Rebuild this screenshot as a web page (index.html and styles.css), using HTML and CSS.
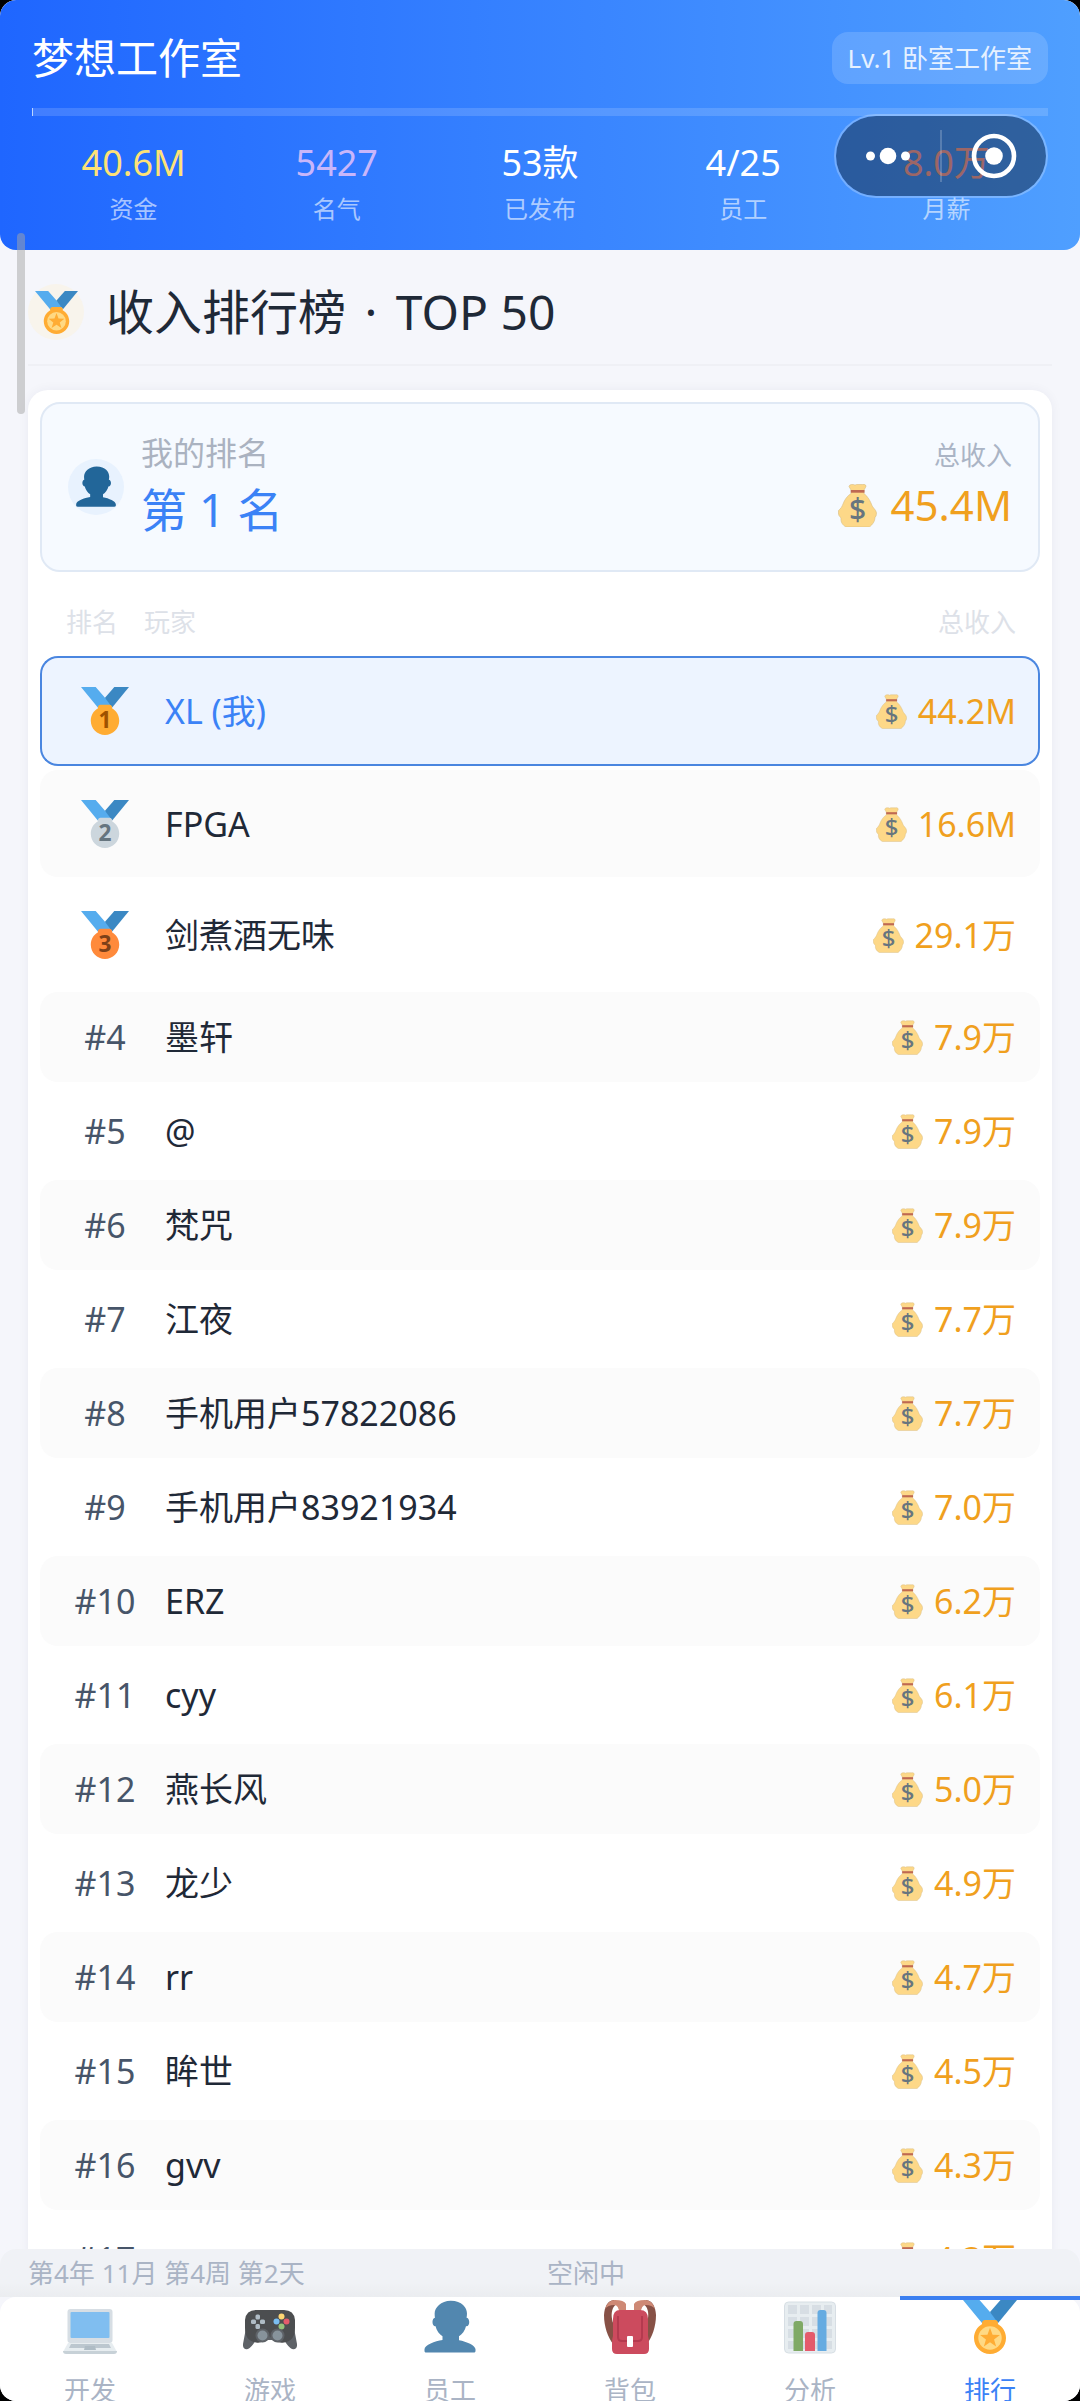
FILE: index.html
```
<!DOCTYPE html>
<html lang="zh-CN">

<head>
    <meta charset="UTF-8">
    <meta name="viewport" content="width=device-width, initial-scale=1.0">
    <link rel="stylesheet" href="styles.css">
    <title>梦想工作室</title>
</head>

<body>

    <!-- icons used more than once -->
    <svg class="sprite" aria-hidden="true">
        <symbol id="bag" viewBox="0 0 39 43">
            <path fill="#fdd888" stroke="#d9bd83" stroke-width=".6" d="M13 6 11 2.500q.5-2 2.500-2h2q1.500 1 3 0h6q2-.5 3 .5 1 1 0 2.500L26 6v3.500c4 3 6.500 8 8 12 .5 2 4 4 4.500 7.500q0 3-1.500 4.500c0 4-2.500 7-5.500 9.500H8c-3.500-2-5.500-5-5-9L1 31.500Q0 29 .5 26.500C3 24.500 4 22.500 5 20c1.500-4 4-8 8-10.500z"/>
            <path fill="#bf6952" d="M12.800 6h13.700v2.700H12.800z"/>
            <text x="19.500" y="36" class="bag-sign">$</text>
        </symbol>
        <symbol id="ribbon" viewBox="0 0 36 36">
            <path fill="#55acee" d="M18 8l-7-8H0l14 17 11.521-4.75z"/>
            <path fill="#3b88c3" d="M25 0l-7 8 5.390 7.312 1.227-1.489L36 0z"/>
            <path fill="currentColor" d="M23.205 16.026c.08-.217.131-.448.131-.693 0-1.104-.896-2-2-2h-6.667c-1.104 0-2 .896-2 2 0 .245.05.476.131.693-3.258 1.826-5.464 5.307-5.464 9.307C7.335 31.224 12.111 36 18.002 36c5.892 0 10.668-4.776 10.668-10.667 0-4-2.206-7.481-5.465-9.307z"/>
        </symbol>
        <symbol id="medal" viewBox="0 0 36 36">
            <use href="#ribbon"/>
            <circle cx="18" cy="25.300" r="7.800" fill="#ffd983"/>
            <path fill="#ffac33" d="M18 18.500l1.700 4.600 4.900.2-3.900 3 1.400 4.700-4.100-2.800-4.100 2.800 1.400-4.700-3.900-3 4.900-.2z"/>
        </symbol>
        <symbol id="person" viewBox="0 0 36 36">
            <path fill="#226699" d="M24 26.799v-2.566c2-1.348 4.080-3.779 4.703-6.896.186.103.206.170.413.170.991 0 1.709-1.287 1.709-2.873 0-1.562-.823-2.827-1.794-2.865.187-.674.293-1.577.293-2.735C29.324 5.168 26 .527 18.541.527c-6.629 0-10.777 4.641-10.777 8.507 0 1.123.069 2.043.188 2.755-.911.137-1.629 1.352-1.629 2.845 0 1.587.804 2.873 1.796 2.873.206 0 .025-.067.209-.170C8.952 20.453 11 22.885 13 24.232v2.414c-5 .645-12 3.437-12 6.230v1.061C1 35 2.076 35 3.137 35h29.725C33.924 35 35 35 35 33.938v-1.061c0-2.615-6-5.225-11-6.078z"/>
        </symbol>
    </svg>

    <div class="app">

        <header class="header">
            <div class="header-top">
                <h1 class="studio">梦想工作室</h1>
                <span class="level">Lv.1 卧室工作室</span>
            </div>
            <div class="progress"><div class="progress-fill"></div></div>
            <div class="stats">
                <div class="stat"><span class="stat-value money">40.6M</span><span class="stat-label">资金</span></div>
                <div class="stat"><span class="stat-value fame">5427</span><span class="stat-label">名气</span></div>
                <div class="stat"><span class="stat-value">53款</span><span class="stat-label">已发布</span></div>
                <div class="stat"><span class="stat-value">4/25</span><span class="stat-label">员工</span></div>
                <div class="stat"><span class="stat-value salary">8.0万</span><span class="stat-label">月薪</span></div>
            </div>
            <div class="capsule">
                <button class="capsule-btn" aria-label="更多">
                    <svg width="46" height="20" viewBox="0 0 46 20" fill="#fff"><circle cx="5.500" cy="10" r="4.500"/><circle cx="23" cy="10" r="8.300"/><circle cx="40.500" cy="10" r="4.500"/></svg>
                </button>
                <button class="capsule-btn" aria-label="关闭">
                    <svg width="46" height="46" viewBox="0 0 46 46"><circle cx="23" cy="23" r="20" fill="none" stroke="#fff" stroke-width="4.600"/><circle cx="23" cy="23" r="8.800" fill="#fff"/></svg>
                </button>
            </div>
        </header>

        <div class="scroll-thumb"></div>

        <main class="content">
            <div class="page-title">
                <span class="round-icon cream"><svg width="43" height="43"><use href="#medal"/></svg></span>
                <h2 class="title">收入排行榜 <span class="title-dot">·</span> TOP 50</h2>
            </div>

            <section class="card">
                <div class="mine">
                    <span class="round-icon sky"><svg width="42" height="42"><use href="#person"/></svg></span>
                    <div class="mine-rank">
                        <div class="mine-label">我的排名</div>
                        <div class="mine-place">第 1 名</div>
                    </div>
                    <div class="mine-total">
                        <div class="total-label">总收入</div>
                        <div class="total-value"><svg width="39" height="43"><use href="#bag"/></svg>45.4M</div>
                    </div>
                </div>

                <table class="ranking">
                    <thead>
                        <tr><th class="rank">排名</th><th>玩家</th><th class="income">总收入</th></tr>
                    </thead>
                    <tbody>
                        <tr class="top me">
                            <td class="rank"><svg class="gold" width="48" height="48" viewBox="0 0 36 36"><use href="#ribbon"/><text x="18" y="31">1</text></svg></td>
                            <td class="name">XL (我)</td>
                            <td class="income"><svg width="31" height="35"><use href="#bag"/></svg>44.2M</td>
                        </tr>
                        <tr class="top">
                            <td class="rank"><svg class="silver" width="48" height="48" viewBox="0 0 36 36"><use href="#ribbon"/><text x="18" y="31">2</text></svg></td>
                            <td class="name">FPGA</td>
                            <td class="income"><svg width="31" height="35"><use href="#bag"/></svg>16.6M</td>
                        </tr>
                        <tr class="top">
                            <td class="rank"><svg class="bronze" width="48" height="48" viewBox="0 0 36 36"><use href="#ribbon"/><text x="18" y="31">3</text></svg></td>
                            <td class="name">剑煮酒无味</td>
                            <td class="income"><svg width="31" height="35"><use href="#bag"/></svg>29.1万</td>
                        </tr>
                        <tr><td class="rank">#4</td><td class="name">墨轩</td><td class="income"><svg width="31" height="35"><use href="#bag"/></svg>7.9万</td></tr>
                        <tr><td class="rank">#5</td><td class="name">@</td><td class="income"><svg width="31" height="35"><use href="#bag"/></svg>7.9万</td></tr>
                        <tr><td class="rank">#6</td><td class="name">梵咒</td><td class="income"><svg width="31" height="35"><use href="#bag"/></svg>7.9万</td></tr>
                        <tr><td class="rank">#7</td><td class="name">江夜</td><td class="income"><svg width="31" height="35"><use href="#bag"/></svg>7.7万</td></tr>
                        <tr><td class="rank">#8</td><td class="name">手机用户57822086</td><td class="income"><svg width="31" height="35"><use href="#bag"/></svg>7.7万</td></tr>
                        <tr><td class="rank">#9</td><td class="name">手机用户83921934</td><td class="income"><svg width="31" height="35"><use href="#bag"/></svg>7.0万</td></tr>
                        <tr><td class="rank">#10</td><td class="name">ERZ</td><td class="income"><svg width="31" height="35"><use href="#bag"/></svg>6.2万</td></tr>
                        <tr><td class="rank">#11</td><td class="name">cyy</td><td class="income"><svg width="31" height="35"><use href="#bag"/></svg>6.1万</td></tr>
                        <tr><td class="rank">#12</td><td class="name">燕长风</td><td class="income"><svg width="31" height="35"><use href="#bag"/></svg>5.0万</td></tr>
                        <tr><td class="rank">#13</td><td class="name">龙少</td><td class="income"><svg width="31" height="35"><use href="#bag"/></svg>4.9万</td></tr>
                        <tr><td class="rank">#14</td><td class="name">rr</td><td class="income"><svg width="31" height="35"><use href="#bag"/></svg>4.7万</td></tr>
                        <tr><td class="rank">#15</td><td class="name">眸世</td><td class="income"><svg width="31" height="35"><use href="#bag"/></svg>4.5万</td></tr>
                        <tr><td class="rank">#16</td><td class="name">gvv</td><td class="income"><svg width="31" height="35"><use href="#bag"/></svg>4.3万</td></tr>
                        <tr><td class="rank">#17</td><td class="name"></td><td class="income"><svg width="31" height="35"><use href="#bag"/></svg>4.3万</td></tr>
                    </tbody>
                </table>
            </section>
        </main>

        <div class="status">
            <span>第4年 11月 第4周 第2天</span>
            <span>空闲中</span>
        </div>

        <nav class="tabs">
            <a class="tab" href="#dev">
                <svg viewBox="0 0 54 54">
                    <rect x="4.500" y="9" width="45" height="34" rx="3" fill="#ccd6dd"/>
                    <rect x="7.500" y="12" width="39" height="26" rx="1" fill="#5dadec"/>
                    <path fill="#e1e8ed" d="M5 43h44l5 9H0z"/>
                    <path fill="#aab8c2" d="M8 44h38l2 4H6z"/>
                    <path fill="#99aab5" d="M22 46h10l1 4H21z"/>
                    <path fill="#b8c5cd" d="M0 51h54q0 3-3 3H3q-3 0-3-3z"/>
                </svg>
                <span>开发</span>
            </a>
            <a class="tab" href="#games">
                <svg viewBox="0 0 54 54">
                    <path fill="#31373d" d="M3 28 0 44q-.5 6 5 5 3-1 8-9h28q5 8 8 9 5.500 1 5-5l-3-16z"/>
                    <path fill="#1b1d20" d="M13 10h28q10 0 11 10v8q0 13-11 14.500-8 1.500-14.500-6.500Q20 44 13 42.500 2 41 2 28v-8q1-10 11-10z"/>
                    <g fill="#99aab5"><rect x="12.500" y="14.500" width="4.500" height="5" rx="1.500"/><rect x="12.500" y="24" width="4.500" height="5" rx="1.500"/><rect x="8" y="19.500" width="5" height="4.500" rx="1.500"/><rect x="17" y="19.500" width="5" height="4.500" rx="1.500"/></g>
                    <circle cx="38.500" cy="16.500" r="3" fill="#ffcc4d"/><circle cx="33.500" cy="21.500" r="3" fill="#55acee"/><circle cx="43.500" cy="21.500" r="3" fill="#dd2e44"/><circle cx="38.500" cy="26.500" r="3" fill="#77b255"/>
                    <circle cx="19.500" cy="35.500" r="7" fill="#31373d"/><circle cx="34.500" cy="35.500" r="7" fill="#31373d"/>
                    <circle cx="19.500" cy="35.500" r="5" fill="#66757f"/><circle cx="34.500" cy="35.500" r="5" fill="#66757f"/>
                </svg>
                <span>游戏</span>
            </a>
            <a class="tab" href="#staff">
                <svg><use href="#person"/></svg>
                <span>员工</span>
            </a>
            <a class="tab" href="#bag-page">
                <svg viewBox="0 0 54 54">
                    <path fill="#662113" d="M11 0Q2 1 1 15c0 12 4 22 9 29l4-14C8 23 6 8 14 4zM43 0q9 1 10 15c0 12-4 22-9 29l-4-14c6-7 8-22 0-26z"/>
                    <path fill="#c1694f" d="M2 9Q5 0 12 0q9 0 11 4v9h-7q0-8-5-8-6 0-9 4zM52 9Q49 0 42 0q-9 0-11 4v9h7q0-8 5-8 6 0 9 4z"/>
                    <path fill="#be1931" d="M17 10h20q8 0 8 9v17q1 3 1 7v6q0 5-5 5H14q-5 0-5-5v-6q0-4 1-7V19q0-9 7-9z"/>
                    <path fill="none" stroke="#a0041e" stroke-width="2" d="M15 16v21q0 4 4 4h16q4 0 4-4V16"/>
                    <rect x="24" y="36" width="6" height="11" rx="1" fill="#fff"/>
                </svg>
                <span>背包</span>
            </a>
            <a class="tab" href="#analysis">
                <svg viewBox="0 0 54 54">
                    <rect x="1.500" y="2" width="51" height="51" rx="4" fill="#e1e8ed" stroke="#ccd6dd"/>
                    <path fill="#ccd6dd" d="M5 5h9v9H5zM17 5h9v9h-9zM29 5h9v9h-9zM41 5h8v9h-8zM5 17h9v9H5zM17 17h9v9h-9zM29 17h9v9h-9zM41 17h8v9h-8zM5 29h9v9H5zM17 29h9v9h-9zM29 29h9v9h-9zM41 29h8v9h-8zM5 41h9v8H5zM17 41h9v8h-9zM29 41h9v8h-9zM41 41h8v8h-8z"/>
                    <path fill="#5c913b" d="M10.500 51V24q0-3 3-3h3.500q3 0 3 3v27z"/>
                    <path fill="#dd2e44" d="M22 51V35q0-3 3-3h4q3 0 3 3v16z"/>
                    <path fill="#3b94d9" d="M34.500 51V13q0-3 3-3h3q3 0 3 3v38z"/>
                </svg>
                <span>分析</span>
            </a>
            <a class="tab active" href="#ranking">
                <svg><use href="#medal"/></svg>
                <span>排行</span>
            </a>
        </nav>

    </div>

</body>

</html>
```
FILE: styles.css
```
* {
    box-sizing: border-box;
}

body {
    margin: 0;
    background: #000;
    color: #1f2937;
    font-family: "Noto Sans", "Noto Sans CJK SC", sans-serif;
}

h1, h2 {
    margin: 0;
    font-weight: 400;
}

svg {
    display: block;
}

.sprite {
    display: none;
}

.app {
    position: relative;
    display: flex;
    flex-direction: column;
    height: 100vh;
    overflow: hidden;
    border-radius: 16px;
    background: #f5f6fb;
}

/* header */
.header {
    position: relative;
    flex: none;
    padding: 32px 32px 18px;
    border-radius: 16px;
    background: linear-gradient(90deg, #1f66ff, #4f9fff);
    color: #fff;
}

.header-top {
    display: flex;
    align-items: center;
    justify-content: space-between;
}

.studio {
    font-size: 42px;
    line-height: 52px;
}

.level {
    padding: 8px 16px;
    border-radius: 16px;
    background: rgba(255, 255, 255, 0.15);
    color: #e6f1ff;
    font-size: 26px;
    line-height: 36px;
}

.progress {
    height: 8px;
    margin-top: 24px;
    background: rgba(255, 255, 255, 0.15);
}

.progress-fill {
    width: 1px;
    height: 100%;
    background: #bcd6ff;
}

.stats {
    display: grid;
    grid-template-columns: repeat(5, 1fr);
    margin-top: 24px;
    text-align: center;
}

.stat {
    display: flex;
    flex-direction: column;
    line-height: 46px;
}

.stat-value {
    font-size: 36px;
}

.stat-label {
    color: rgba(255, 255, 255, 0.6);
    font-size: 24px;
}

.money {
    color: #fde277;
}

.fame {
    color: #c9b6fa;
}

.salary {
    color: #fca5a5;
}

/* mini program menu, floats over the header */
.capsule {
    position: absolute;
    top: 114px;
    right: 32px;
    display: flex;
    width: 214px;
    height: 84px;
    padding: 14px 0;
    border: 2px solid rgba(255, 255, 255, 0.25);
    border-radius: 42px;
    background: rgba(0, 0, 0, 0.38);
    background-clip: padding-box;
}

.capsule-btn {
    display: flex;
    flex: 1;
    align-items: center;
    justify-content: center;
    padding: 0;
    border: none;
    background: none;
}

.capsule-btn + .capsule-btn {
    border-left: 2px solid rgba(255, 255, 255, 0.2);
}

.scroll-thumb {
    position: absolute;
    top: 233px;
    left: 17px;
    width: 8px;
    height: 181px;
    border-radius: 4px;
    background: rgba(165, 165, 165, 0.5);
}

/* page */
.content {
    flex: 1;
    min-height: 0;
    padding: 0 28px;
    overflow-y: auto;
    scrollbar-width: none;
}

.page-title {
    display: flex;
    align-items: center;
    gap: 22px;
    padding: 30px 0 20px;
    border-bottom: 2px solid #eff0f5;
}

.round-icon {
    display: flex;
    flex: none;
    align-items: center;
    justify-content: center;
    width: 56px;
    height: 56px;
    border-radius: 50%;
}

.cream {
    background: #f8f4ec;
    color: #ffac33;
}

.sky {
    background: #e8f2fe;
}

.title {
    font-size: 48px;
    line-height: 64px;
}

.title-dot {
    margin: 0 6px;
}

.card {
    margin-top: 24px;
    padding: 12px;
    border-radius: 20px;
    background: #fff;
    box-shadow: 0 0 12px rgba(30, 40, 80, 0.05);
}

.mine {
    display: flex;
    align-items: center;
    gap: 17px;
    padding: 27px 26px;
    border: 2px solid #e0e9f5;
    border-radius: 20px;
    background: #f6faff;
}

.mine-label {
    color: #aab2c0;
    font-size: 32px;
    line-height: 44px;
}

.mine-place {
    color: #3b82f6;
    font-size: 46px;
    line-height: 68px;
}

.mine-total {
    margin-left: auto;
    text-align: right;
}

.total-label {
    color: #aab4c5;
    font-size: 26px;
    line-height: 36px;
}

.total-value {
    display: flex;
    align-items: center;
    gap: 14px;
    color: #f0a01e;
    font-size: 42px;
    line-height: 64px;
}

/* ranking */
.ranking {
    width: 100%;
    margin-top: 16px;
    border-collapse: separate;
    border-spacing: 0 4px;
    font-size: 34px;
    line-height: 50px;
}

.ranking th {
    height: 60px;
    padding: 0;
    color: #dde1e8;
    font-size: 26px;
    font-weight: 400;
    line-height: 36px;
    text-align: left;
}

.ranking td {
    height: 90px;
    padding: 0;
}

.ranking .top td {
    height: 107px;
}

.ranking .me td {
    height: 110px;
    border: 2px solid #4a86e0;
    border-width: 2px 0;
    background: #edf4ff;
}

.ranking tbody tr:nth-child(even) td {
    background: #fbfbfb;
}

.ranking td:first-child {
    border-radius: 18px 0 0 18px;
}

.ranking td:last-child {
    border-radius: 0 18px 18px 0;
}

.ranking .me td:first-child {
    padding-left: 24px;
    border-left-width: 2px;
}

.ranking .me td:last-child {
    padding-right: 22px;
    border-right-width: 2px;
}

.ranking .rank {
    width: 104px;
    padding-left: 26px;
}

.ranking td.rank {
    color: #475569;
    text-align: center;
}

.rank svg {
    margin: 0 auto;
}

.ranking .name {
    padding-left: 21px;
}

.me .name {
    color: #3b82f6;
}

.ranking .income {
    padding-right: 24px;
    text-align: right;
}

.ranking td.income {
    color: #f0a01e;
}

.income svg {
    display: inline-block;
    margin-right: 11px;
    vertical-align: -5px;
}

.bag-sign {
    fill: #67757f;
    font-size: 30px;
    font-weight: 500;
    text-anchor: middle;
}

.rank text {
    font-size: 17px;
    font-weight: 700;
    text-anchor: middle;
}

.gold {
    color: #ffac33;
    fill: #9e5200;
}

.silver {
    color: #ccd6dd;
    fill: #66757f;
}

.bronze {
    color: #ff8a3b;
    fill: #7c4119;
}

/* bottom */
.status {
    display: grid;
    flex: none;
    grid-template-columns: 1fr 1fr;
    gap: 14px;
    padding: 5px 28px;
    border-radius: 16px 16px 0 0;
    background: linear-gradient(#f0f2f6 70%, #ebedf0);
    color: #aab4c5;
    font-size: 26px;
    line-height: 38px;
}

.tabs {
    display: grid;
    flex: none;
    grid-template-columns: repeat(6, 1fr);
    height: 104px;
    border-radius: 16px 16px 0 0;
    background: #fff;
}

.tab {
    position: relative;
    display: flex;
    flex-direction: column;
    align-items: center;
    gap: 17px;
    padding-top: 3px;
    color: #aab4c5;
    font-size: 26px;
    line-height: 38px;
    text-decoration: none;
}

.tab svg {
    flex: none;
    width: 54px;
    height: 54px;
    opacity: 0.78;
}

.tab.active {
    color: #3b82f6;
}

.tab.active svg {
    color: #ffac33;
    opacity: 1;
}

.tab.active::before {
    content: "";
    position: absolute;
    top: -1px;
    left: 0;
    right: 0;
    height: 4px;
    background: #3b7ff0;
}
```
